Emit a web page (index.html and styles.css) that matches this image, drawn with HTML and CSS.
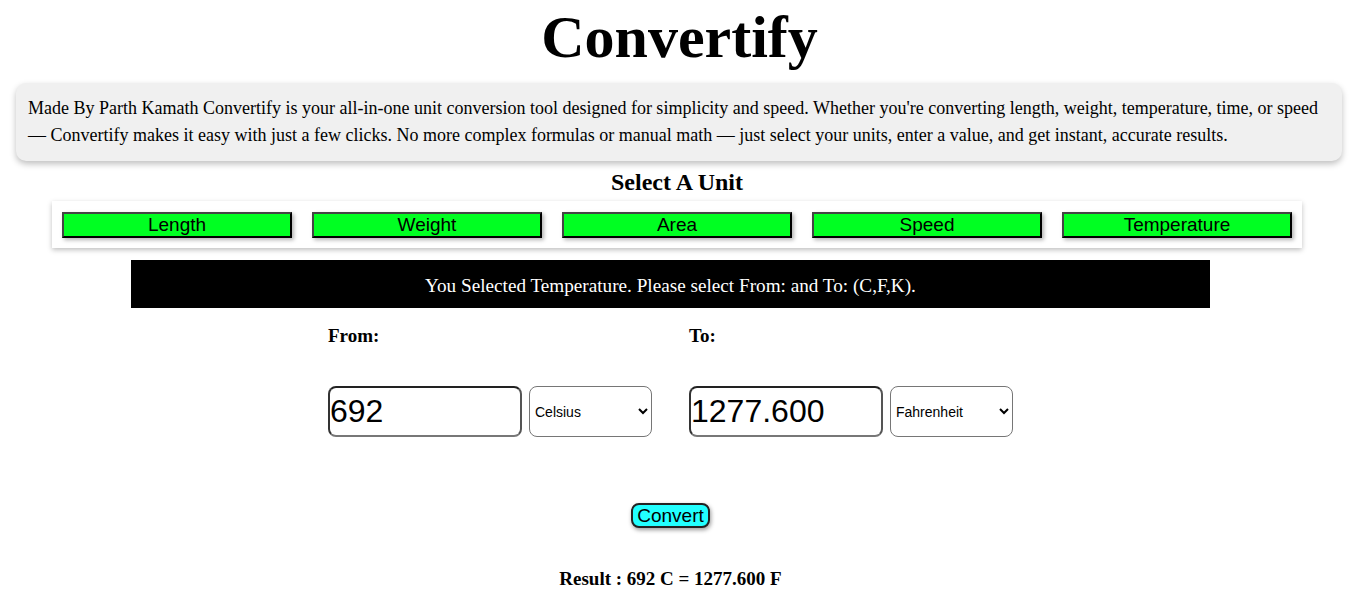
FILE: index.html
```html
<!DOCTYPE html>
<html>
<head>
<meta charset="utf-8">
<title>Convertify</title>
<link rel="stylesheet" href="styles.css">
</head>
<body>
<h1 class="title">Convertify</h1>
<div class="intro">Made By Parth Kamath Convertify is your all-in-one unit conversion tool designed for simplicity and speed. Whether you're converting length, weight, temperature, time, or speed — Convertify makes it easy with just a few clicks. No more complex formulas or manual math — just select your units, enter a value, and get instant, accurate results.</div>
<h2 class="section-title">Select A Unit</h2>
<div class="units">
  <button class="unit-btn">Length</button>
  <button class="unit-btn">Weight</button>
  <button class="unit-btn">Area</button>
  <button class="unit-btn">Speed</button>
  <button class="unit-btn">Temperature</button>
</div>
<div class="main">
  <div class="banner">You Selected Temperature. Please select From: and To: (C,F,K).</div>
  <div class="converter">
    <div class="col">
      <div class="label">From:</div>
      <div class="fields">
        <input class="value" type="text" value="692">
        <select class="unit-select"><option>Celsius</option><option>Fahrenheit</option><option>Kelvin</option></select>
      </div>
    </div>
    <div class="col">
      <div class="label">To:</div>
      <div class="fields">
        <input class="value" type="text" value="1277.600">
        <select class="unit-select"><option>Fahrenheit</option><option>Celsius</option><option>Kelvin</option></select>
      </div>
    </div>
  </div>
  <div class="actions"><button class="convert-btn">Convert</button></div>
  <div class="result">Result : 692 C = 1277.600 F</div>
</div>
</body>
</html>
```
FILE: styles.css
```css
body {
  margin: 8px;
  font-family: "Liberation Serif", "Times New Roman", serif;
  color: #000;
  background: #fff;
}
.title {
  font-size: 60px;
  font-weight: bold;
  text-align: center;
  margin: 0 0 17px;
  line-height: 58px;
}
.intro {
  background: #f0f0f0;
  border-radius: 10px;
  box-shadow: 0 3px 6px rgba(0, 0, 0, 0.25);
  padding: 12px;
  font-size: 18px;
  line-height: 27px;
  margin: 0 9px 0 8px;
}
.section-title {
  font-size: 24px;
  text-align: center;
  margin: 8px 0 5px;
  padding-right: 5px;
  line-height: 27px;
}
.units {
  display: flex;
  gap: 20px;
  width: 1230px;
  padding: 11px 10px 10px;
  margin: 0 auto 0 44px;
  background: #fff;
  box-shadow: 0 2px 5px rgba(0, 0, 0, 0.25);
}
.unit-btn {
  width: 230px;
  height: 26px;
  padding: 0;
  background: #00ff22;
  border: 2px solid #000;
  border-color: #444 #000 #000 #444;
  box-shadow: 2px 2px 4px rgba(0, 0, 0, 0.3);
  font-family: "Liberation Sans", Arial, sans-serif;
  font-size: 19px;
  color: #000;
}
.main {
  margin-right: 18px;
}
.banner {
  width: 1079px;
  height: 48px;
  box-sizing: border-box;
  padding-top: 4px;
  margin: 12px auto 0;
  background: #000;
  color: #fff;
  font-size: 19.2px;
  display: flex;
  align-items: center;
  justify-content: center;
}
.converter {
  display: flex;
  justify-content: center;
  gap: 37px;
  margin-top: 17px;
}
.col {
  display: flex;
  flex-direction: column;
}
.label {
  font-weight: bold;
  font-size: 19px;
  line-height: 22px;
  height: 22px;
  margin-bottom: 39px;
}
.fields {
  display: flex;
  gap: 7px;
}
.value {
  width: 194px;
  height: 51px;
  box-sizing: border-box;
  border: 2px solid #222;
  border-color: #222 #555 #777 #333;
  border-radius: 8px;
  padding: 0;
  font-family: "Liberation Sans", Arial, sans-serif;
  font-size: 32px;
  color: #000;
  background: #fff;
  margin: 0;
}
.unit-select {
  width: 123px;
  height: 51px;
  box-sizing: border-box;
  border: 1px solid #767676;
  border-radius: 8px;
  font-family: "Liberation Sans", Arial, sans-serif;
  font-size: 14px;
  padding: 0 1px;
  background: #fff;
  color: #000;
  margin: 0;
}
.actions {
  display: flex;
  justify-content: center;
  margin-top: 66px;
}
.convert-btn {
  width: 79px;
  height: 25px;
  padding: 0;
  background: #22ffff;
  border: 2px solid #222;
  border-radius: 8px;
  box-shadow: 1px 2px 4px rgba(0, 0, 0, 0.4);
  font-family: "Liberation Sans", Arial, sans-serif;
  font-size: 19px;
  color: #000;
}
.result {
  text-align: center;
  font-weight: bold;
  font-size: 19px;
  margin-top: 40px;
}
```
